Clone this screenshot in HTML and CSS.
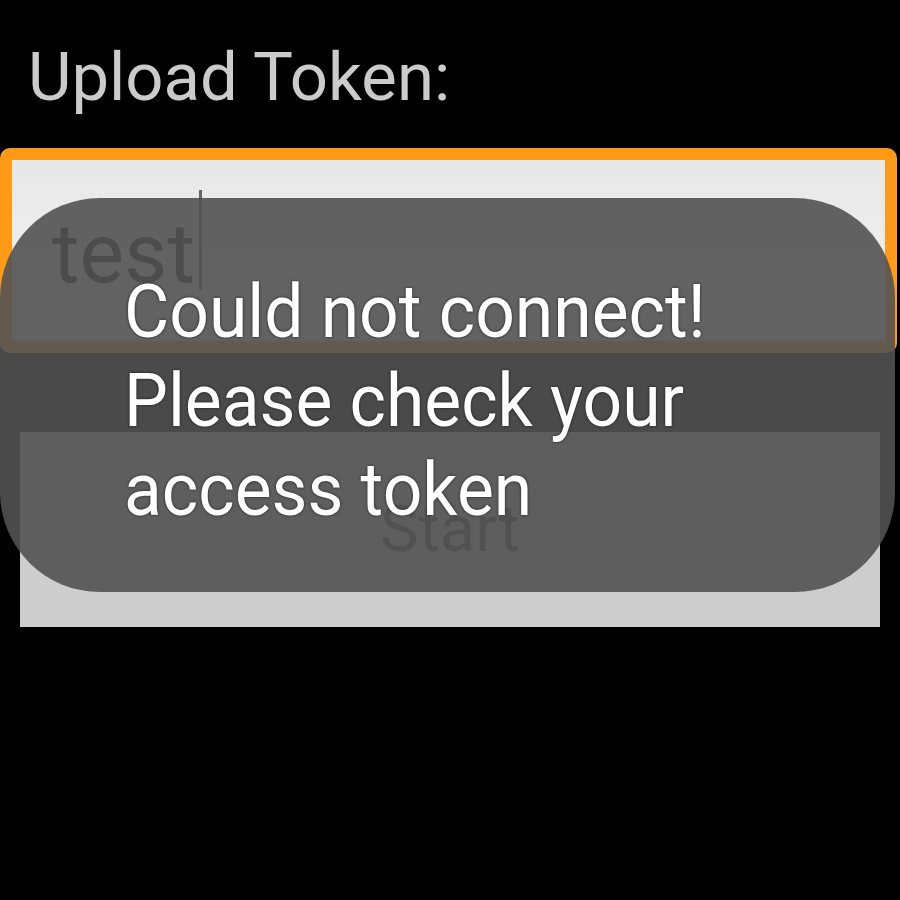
FILE: index.html
```html
<!DOCTYPE html>
<html lang="en">
<head>
    <meta charset="UTF-8">
    <meta name="viewport" content="width=device-width, initial-scale=1.0">
    <title>Upload Token</title>
    <link rel="stylesheet" href="styles.css">
</head>
<body>
    <div class="screen">
        <div class="title">Upload Token:</div>

        <div class="token-field">
            <span class="token-value">test</span><span class="cursor"></span>
        </div>

        <div class="start-button">Start</div>

        <!-- toast sobre o conteúdo -->
        <div class="toast">
            <div class="toast-text">
                Could not connect!<br>
                Please check your<br>
                access token
            </div>
        </div>
    </div>
</body>
</html>
```

FILE: styles.css
```css
body {
    margin: 0;
    background: #000;
    font-family: Roboto, "Noto Sans", sans-serif;
    overflow: hidden;
}

.screen {
    position: relative;
    width: 900px;
    height: 900px;
    display: flex;
    flex-direction: column;
}

.title {
    margin-top: 37px;
    padding-left: 28px;
    font-size: 67px;
    line-height: 80px;
    color: #cbcbcb;
}

.token-field {
    margin-top: 31px;
    width: 833px;
    height: 181px;
    border: 12px solid #ff9a16;
    border-radius: 10px;
    background: linear-gradient(#e8e8e8, #f2f2f2);
    display: flex;
    align-items: flex-start;
    padding-left: 40px;
}

.token-value {
    font-size: 84px;
    line-height: 96px;
    margin-top: 46px;
    color: #1a1a1a;
}

.cursor {
    width: 3px;
    height: 100px;
    margin-top: 30px;
    margin-left: 4px;
    background: #666;
}

.start-button {
    margin: 79px 0 0 20px;
    width: 860px;
    height: 195px;
    background: #cdcdcd;
    color: #4a4a4a;
    font-size: 65px;
    text-align: center;
    line-height: 195px;
}

.toast {
    position: absolute;
    left: 0;
    top: 198px;
    width: 895px;
    height: 394px;
    border-radius: 100px;
    background: rgba(82, 82, 82, 0.9);
}

.toast-text {
    padding: 69px 0 0 124px;
    font-size: 74px;
    line-height: 89px;
    color: #fff;
    white-space: nowrap;
    transform: scaleX(0.94);
    transform-origin: 124px 0;
    text-shadow: 0 0 3px rgba(0, 0, 0, 0.7);
}
```
